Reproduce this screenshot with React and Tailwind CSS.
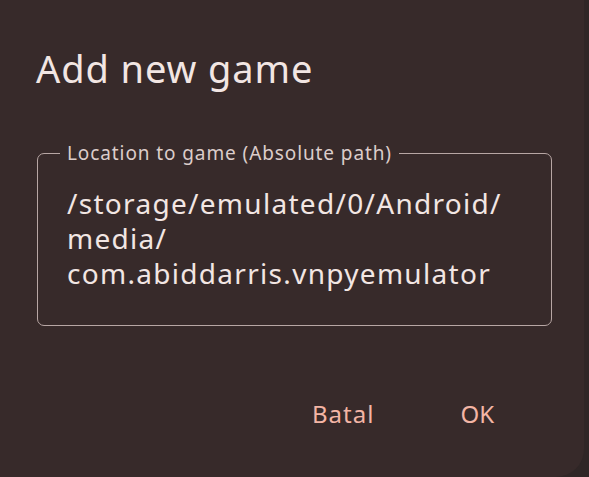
import React from 'react'

const App = () => {
  return (
    <div className='w-[589px] h-[477px] bg-[#2f2626] overflow-hidden' style={{ fontFamily: '"Noto Sans", sans-serif' }}>
      <div className='w-[584px] h-[477px] bg-[#372a2a] rounded-br-[28px] flex flex-col'>
        <h1 className='pl-[36px] pt-[43px] text-[38px] tracking-[0.9px] leading-[50px] text-[#f2e6e3]'>Add new game</h1>
        <fieldset className='ml-[37px] mr-[32px] mt-[46px] h-[187px] border-[1.5px] border-[#b7a6a4] rounded-[7px] pl-[29px] pr-4'>
          <legend className='px-[7px] -ml-[7px] text-[19px] tracking-[0.9px] text-[#dccdca]'>Location to game (Absolute path)</legend>
          <div className='pt-[18px] text-[28px] tracking-[1.3px] leading-[35px] text-[#f2e6e3]'>
            <div>/storage/emulated/0/Android/</div>
            <div>media/</div>
            <div>com.abiddarris.vnpyemulator</div>
          </div>
        </fieldset>
        <div className='flex justify-end items-center gap-[86px] pr-[90px] mt-[70px] text-[24px] text-[#f3b5a5]'>
          <button className='tracking-[1px]'>Batal</button>
          <button>OK</button>
        </div>
      </div>
    </div>
  )
}

export default App
